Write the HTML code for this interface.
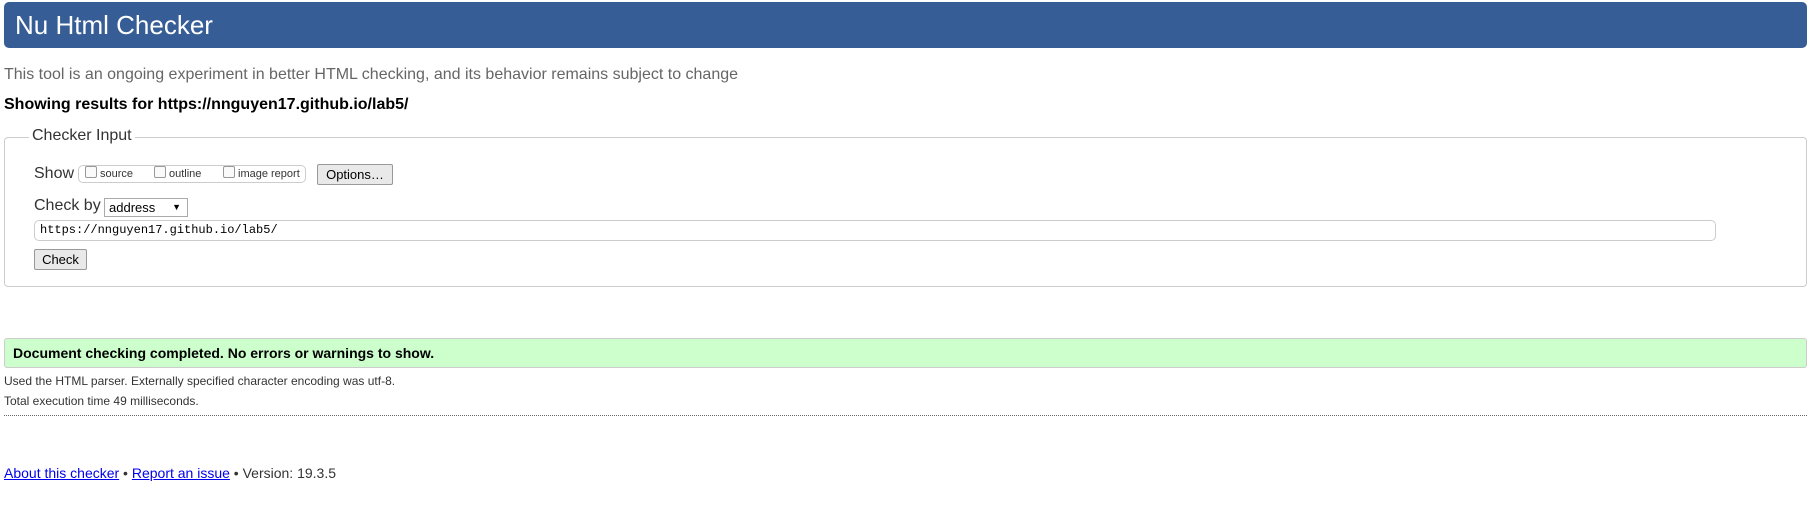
<!DOCTYPE html>
<html><head><meta charset="utf-8"><style>
body{margin:0;font-family:"Liberation Sans",Arial,sans-serif;background:#fff;color:#000;width:1814px;height:520px;overflow:hidden;position:relative}
.a{position:absolute;white-space:nowrap}
h1{position:absolute;left:4px;top:2px;width:1803px;height:46px;margin:0;background:#365d95;border-radius:5px;color:#fff;font-weight:normal;font-size:26px;line-height:46px;padding-left:11px;box-sizing:border-box}
.fs{position:absolute;left:4px;top:137px;width:1803px;height:150px;border:1px solid #ccc;border-radius:4px;box-sizing:border-box}
.btn{position:absolute;background:#e9e9e9;border:1px solid #999;border-radius:2px;font-size:13px;text-align:center;box-sizing:border-box}
.cb{display:inline-block;width:10px;height:10px;border:1px solid #999;border-radius:2px;vertical-align:-1px;margin-right:3px;background:#fafafa}
</style></head><body>
<h1>Nu Html Checker</h1>
<div class="a" style="left:4px;top:66px;font-size:16px;color:#666">This tool is an ongoing experiment in better HTML checking, and its behavior remains subject to change</div>
<div class="a" style="left:4px;top:96px;font-size:16px;font-weight:bold">Showing results for https://nnguyen17.github.io/lab5/</div>
<div class="fs"></div>
<div class="a" style="left:29px;top:127px;font-size:16px;background:#fff;padding:0 3px;color:#333">Checker Input</div>
<div class="a" style="left:34px;top:165px;font-size:16px;color:#333">Show</div>
<div class="a" style="left:78px;top:165px;width:228px;height:18px;border:1px solid #ccc;border-radius:5px;box-sizing:border-box"></div>
<div class="a" style="left:85px;top:166px;font-size:11px;color:#333"><span class="cb"></span>source</div>
<div class="a" style="left:154px;top:166px;font-size:11px;color:#333"><span class="cb"></span>outline</div>
<div class="a" style="left:223px;top:166px;font-size:11px;color:#333"><span class="cb"></span>image report</div>
<div class="btn" style="left:317px;top:164px;width:76px;height:21px;line-height:19px">Options…</div>
<div class="a" style="left:34px;top:197px;font-size:16px;color:#333">Check by</div>
<div class="a" style="left:104px;top:198px;width:84px;height:19px;border:1px solid #aaa;box-sizing:border-box;font-size:13px;line-height:17px;padding-left:4px">address<span style="position:absolute;right:6px;font-size:9px">▼</span></div>
<div class="a" style="left:34px;top:220px;width:1682px;height:21px;border:1px solid #ccc;border-radius:5px;box-sizing:border-box;font-family:'Liberation Mono',monospace;font-size:12px;line-height:19px;padding-left:5px">https://nnguyen17.github.io/lab5/</div>
<div class="btn" style="left:34px;top:249px;width:53px;height:21px;line-height:19px">Check</div>
<div class="a" style="left:4px;top:338px;width:1803px;height:30px;background:#cfc;border:1px solid #ccc;border-radius:3px;box-sizing:border-box;font-size:14px;font-weight:bold;line-height:28px;padding-left:8px">Document checking completed. No errors or warnings to show.</div>
<div class="a" style="left:4px;top:374px;font-size:12px;color:#333">Used the HTML parser. Externally specified character encoding was utf-8.</div>
<div class="a" style="left:4px;top:394px;font-size:12px;color:#333">Total execution time 49 milliseconds.</div>
<div class="a" style="left:4px;top:415px;width:1803px;border-top:1px dotted #666"></div>
<div class="a" style="left:4px;top:465px;font-size:14px;color:#333"><span style="color:#00e;text-decoration:underline">About this checker</span> • <span style="color:#00e;text-decoration:underline">Report an issue</span> • Version: 19.3.5</div>
</body></html>
